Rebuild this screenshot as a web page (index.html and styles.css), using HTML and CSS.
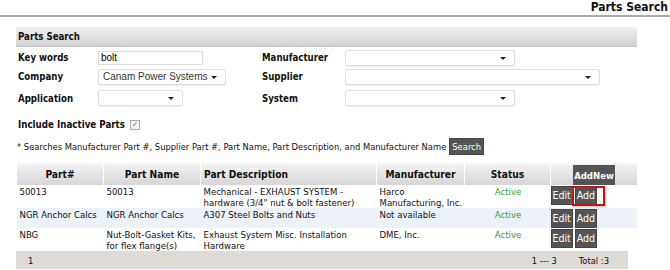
FILE: index.html
```html
<!DOCTYPE html>
<html lang="en">
<head>
  <meta charset="UTF-8" />
  <title>Parts Search</title>
  <link rel="stylesheet" href="styles.css">
</head>
<body>

<div class="page-title">Parts Search</div>

<main>
  <div class="panel-head">Parts Search</div>

  <div class="search-form">
    <label>Key words</label>
    <div><input type="text" class="txt" value="bolt" /></div>
    <label>Manufacturer</label>
    <div><div class="sel w170"></div></div>

    <label>Company</label>
    <div><div class="sel w128">Canam Power Systems</div></div>
    <label>Supplier</label>
    <div><div class="sel w255"></div></div>

    <label class="tall">Application</label>
    <div class="tall"><div class="sel w85"></div></div>
    <label class="tall">System</label>
    <div class="tall"><div class="sel w170"></div></div>
  </div>

  <div class="inactive">
    <b>Include Inactive Parts</b>
    <span class="check">&#10003;</span>
  </div>

  <div class="hint">
    * Searches Manufacturer Part #, Supplier Part #, Part Name, Part Description, and Manufacturer Name
    <button class="btn search">Search</button>
  </div>

  <div class="results">
    <table class="parts">
      <colgroup>
        <col style="width:87px">
        <col style="width:97px">
        <col style="width:176px">
        <col style="width:88px">
        <col style="width:86px">
        <col>
      </colgroup>
      <thead>
        <tr>
          <th>Part#</th>
          <th>Part Name</th>
          <th class="left">Part Description</th>
          <th>Manufacturer</th>
          <th>Status</th>
          <th class="act-head"><button class="btn addnew">AddNew</button></th>
        </tr>
      </thead>
      <tbody>
        <tr>
          <td>50013</td>
          <td>50013</td>
          <td>Mechanical - EXHAUST SYSTEM - hardware (3/4" nut &amp; bolt fastener)</td>
          <td>Harco Manufacturing, Inc.</td>
          <td class="active">Active</td>
          <td class="acts"><button class="btn">Edit</button><span class="hl"><button class="btn">Add</button></span></td>
        </tr>
        <tr class="alt">
          <td>NGR Anchor Calcs</td>
          <td>NGR Anchor Calcs</td>
          <td>A307 Steel Bolts and Nuts</td>
          <td>Not available</td>
          <td class="active">Active</td>
          <td class="acts"><button class="btn">Edit</button><button class="btn">Add</button></td>
        </tr>
        <tr>
          <td>NBG</td>
          <td>Nut-Bolt-Gasket Kits, for flex flange(s)</td>
          <td>Exhaust System Misc. Installation Hardware</td>
          <td>DME, Inc.</td>
          <td class="active">Active</td>
          <td class="acts"><button class="btn">Edit</button><button class="btn">Add</button></td>
        </tr>
      </tbody>
    </table>
    <div class="pager">
      <span class="page-no">1</span>
      <span class="range">1 --- 3</span>
      <span class="total">Total :3</span>
    </div>
  </div>
</main>

</body>
</html>
```

FILE: styles.css
```css
body {
  margin: 0;
  font-family: 'DejaVu Sans Condensed', 'DejaVu Sans', Verdana, sans-serif;
  font-size: 9.3px;
  color: #111;
  background: #fff;
}
.page-title {
  text-align: right;
  font-weight: bold;
  font-size: 12px;
  height: 15px;
  line-height: 14px;
  padding-right: 2px;
  border-bottom: 2px solid #aaa;
}
main {
  width: 621px;
  margin: 10px 0 0 16px;
}
.panel-head {
  height: 19px;
  line-height: 20px;
  padding-left: 2px;
  font-weight: bold;
  font-size: 9.6px;
  background: linear-gradient(#f0f0f0, #d2d2d2);
  border-bottom: 1px solid #c4c4c4;
}

/* search form */
.search-form {
  display: grid;
  grid-template-columns: 80px 164px 83px 1fr;
  grid-auto-rows: 19px;
  align-items: center;
  margin-top: 1px;
  padding-left: 2px;
}
.search-form label {
  font-weight: bold;
  font-size: 9.6px;
}
.search-form .tall {
  margin-top: 5px;
}
.txt {
  box-sizing: border-box;
  width: 105px;
  height: 14px;
  border: 1px solid #ddd;
  font-family: 'Liberation Sans', Arial, sans-serif;
  font-size: 10px;
  padding: 0 2px;
  margin: 0;
}
.sel {
  box-sizing: border-box;
  height: 16px;
  border: 1px solid #ddd;
  border-radius: 2px;
  box-shadow: 0 1px 1px #eee;
  font-family: 'Liberation Sans', Arial, sans-serif;
  font-size: 10px;
  line-height: 14px;
  padding-left: 4px;
  position: relative;
  color: #333;
}
.sel::after {
  content: '';
  position: absolute;
  right: 8px;
  top: 6px;
  border-left: 3px solid transparent;
  border-right: 3px solid transparent;
  border-top: 3px solid #222;
}
.w170 { width: 170px; }
.w128 { width: 128px; }
.w255 { width: 255px; }
.w85 { width: 85px; }

.inactive {
  margin-top: 14px;
  padding-left: 2px;
  font-size: 9.7px;
  display: flex;
  align-items: center;
  gap: 5px;
}
.check {
  display: inline-block;
  width: 8px;
  height: 8px;
  border: 1px solid #aaa;
  background: #f2f2f2;
  font-size: 8px;
  line-height: 8px;
  text-align: center;
  color: #667;
}
.hint {
  margin-top: 8px;
  padding-left: 1px;
  display: flex;
  align-items: center;
  gap: 3px;
}
.btn {
  background: #555;
  color: #fff;
  border: 1px solid #444;
  font-family: inherit;
  font-size: 10px;
  padding: 2px 2px;
  line-height: 13px;
  cursor: pointer;
}
.btn.search {
  font-size: 9.3px;
  padding: 1px 2px;
}

/* results */
.results {
  margin-top: 8px;
}
.parts {
  width: 100%;
  border-collapse: collapse;
  table-layout: fixed;
}
.parts th {
  height: 22px;
  padding: 0 3px;
  font-weight: bold;
  font-size: 10.2px;
  background: linear-gradient(#f4f4f4, #d6d6d6);
  border-left: 1px solid #fff;
}
.parts th.left { text-align: left; }
.parts th.act-head {
  vertical-align: bottom;
  padding: 0;
}
.btn.addnew {
  font-weight: bold;
  font-size: 9.5px;
  padding: 3px 0 2px;
  border-color: #555;
}
.parts td {
  vertical-align: top;
  padding: 1px 2px 0 3px;
  line-height: 11px;
  height: 19px;
  font-size: 9.5px;
}
.parts tbody tr:first-child td {
  height: 20px;
}
.parts tr.alt td {
  background: #edf1f8;
}
.parts td.active {
  color: #2fa02f;
  text-align: center;
}
.parts td.acts {
  white-space: nowrap;
  padding: 1px 0 0;
}
.acts .btn {
  margin-right: 2px;
  padding: 2px 1px;
  font-size: 10.5px;
}
.hl {
  position: relative;
}
.hl::after {
  content: '';
  position: absolute;
  left: -3px;
  top: -4px;
  right: -6px;
  bottom: -5px;
  border: 2px solid #c0141c;
  box-shadow: 1px 1px 2px #bbb;
}
.pager {
  width: 612px;
  height: 18px;
  background: #dedbd6;
  display: flex;
  align-items: center;
}
.page-no { margin-left: 12px; flex: 1; }
.range { margin-right: 22px; }
.total { margin-right: 19px; }
```
